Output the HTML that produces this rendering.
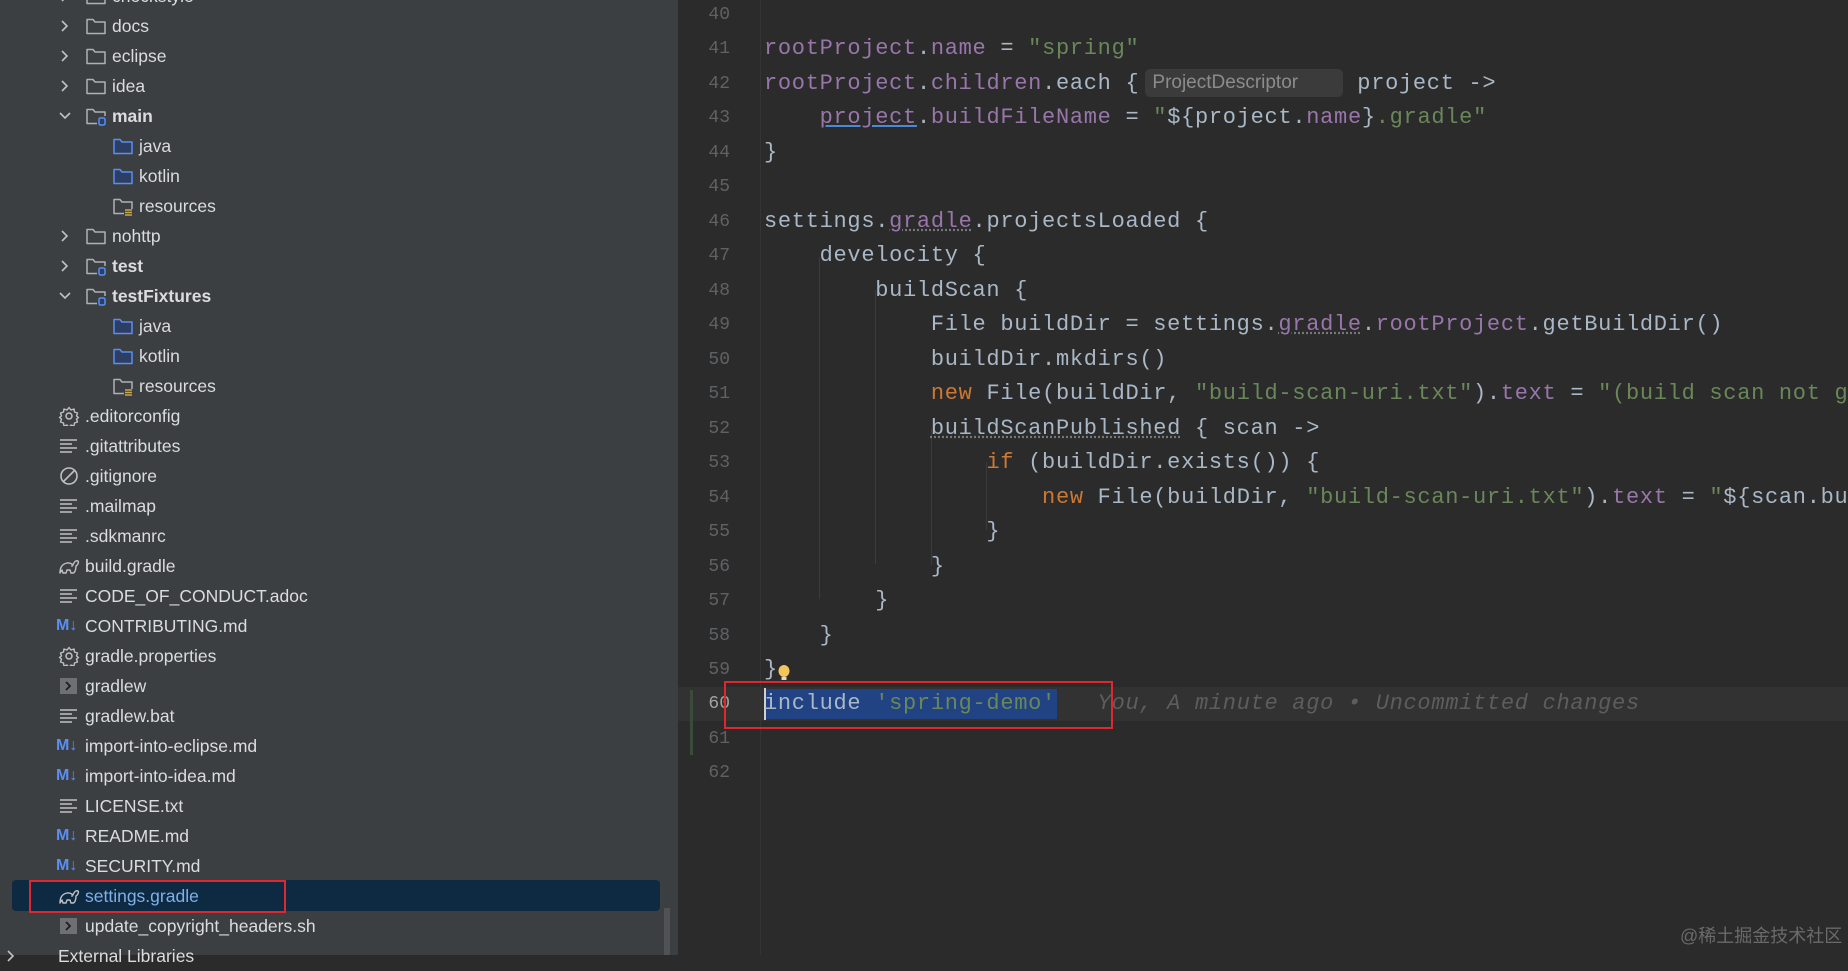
<!DOCTYPE html>
<html><head><meta charset="utf-8"><style>
*{margin:0;padding:0;box-sizing:border-box}
body{width:1848px;height:955px;overflow:hidden;background:#2b2b2b;position:relative;font-family:"Liberation Sans",sans-serif}
#side{position:absolute;left:0;top:0;width:678px;height:955px;background:#3c3f41}
.r{position:absolute;height:30px;line-height:30px;font-size:17.5px;color:#dadcdf;white-space:nowrap}
.r svg{position:absolute;top:5px}
.b{font-weight:bold}
.sel{position:absolute;left:12px;top:880px;width:648px;height:31px;background:#0d2a42;border-radius:4px}
.red{position:absolute;border:2px solid #e0262e}
#ed{position:absolute;left:678px;top:0;width:1170px;height:955px;background:#2b2b2b;overflow:hidden}
.ln{position:absolute;left:0;width:52px;text-align:right;font-family:"Liberation Mono",monospace;font-size:18px;color:#5f6265;height:34px;line-height:34px}
.c{position:absolute;left:86px;font-family:"Liberation Mono",monospace;font-size:22px;letter-spacing:0.7px;color:#a9b7c6;height:34px;line-height:34px;white-space:pre}
.p{color:#9876aa}.s{color:#6a8759}.k{color:#cc7832}
.g{position:absolute;width:1px;background:#3b3b3b}
.md{position:absolute;left:56px;top:0;font-weight:bold;color:#5a8ef2;font-size:16px}
</style></head><body>
<svg width="0" height="0" style="position:absolute">
<defs>
<symbol id="fo" viewBox="0 0 22 20"><path d="M2 3.5h6l2 2.5h10v11.5H2z" fill="none" stroke="#aeb1b4" stroke-width="1.5" stroke-linejoin="round"/></symbol>
<symbol id="fb" viewBox="0 0 22 20"><path d="M2 3.5h6l2 2.5h10v11.5H2z" fill="#2c3e63" stroke="#5a8ef2" stroke-width="1.5" stroke-linejoin="round"/></symbol>
<symbol id="fm" viewBox="0 0 22 20"><path d="M12 17.5H2V3.5h6l2 2.5h10v4" fill="none" stroke="#aeb1b4" stroke-width="1.5" stroke-linejoin="round"/><rect x="14" y="12" width="6" height="7" rx="1.5" fill="#2c3e63" stroke="#5a8ef2" stroke-width="1.5"/></symbol>
<symbol id="fr" viewBox="0 0 22 20"><path d="M12 17.5H2V3.5h6l2 2.5h10v7" fill="none" stroke="#aeb1b4" stroke-width="1.5" stroke-linejoin="round"/><path d="M13 14h7M13 16.5h7M13 19h7" stroke="#c9a74a" stroke-width="1.5"/></symbol>
<symbol id="ch" viewBox="0 0 14 20"><path d="M4 5l5 5-5 5" fill="none" stroke="#bfc1c4" stroke-width="1.6"/></symbol>
<symbol id="cd" viewBox="0 0 14 20"><path d="M2 7l5 5 5-5" fill="none" stroke="#bfc1c4" stroke-width="1.6"/></symbol>
<symbol id="tx" viewBox="0 0 22 20"><path d="M2 4h17M2 8h12M2 12h17M2 16h12" stroke="#bfc1c4" stroke-width="1.6"/></symbol>
<symbol id="gr" viewBox="0 0 22 20"><circle cx="11" cy="10" r="3" fill="none" stroke="#bfc1c4" stroke-width="1.5"/><path d="M11 1.5l2 2.5 3-1 .5 3 3 1-1 3 2 1.5-2 1.5 1 3-3 1-.5 3-3-1-2 2.5-2-2.5-3 1-.5-3-3-1 1-3-2-1.5 2-1.5-1-3 3-1 .5-3 3 1z" fill="none" stroke="#bfc1c4" stroke-width="1.4" stroke-linejoin="round"/></symbol>
<symbol id="no" viewBox="0 0 22 20"><circle cx="11" cy="10" r="8" fill="none" stroke="#bfc1c4" stroke-width="1.6"/><path d="M5.5 15.5l11-11" stroke="#bfc1c4" stroke-width="1.6"/></symbol>
<symbol id="el" viewBox="0 0 22 20"><path d="M2 17c0-5 2-9 7-10 3-.5 5 1 6 2 1-3 3-5 5-4 1 1 0 4-2 5 0 3-1 7-3 7h-2l-1-3h-3l-1 3H5l-1-3-2 3z" fill="none" stroke="#bfc1c4" stroke-width="1.4" stroke-linejoin="round"/><circle cx="14" cy="10" r=".9" fill="#bfc1c4"/></symbol>
<symbol id="sh" viewBox="0 0 22 20"><rect x="2" y="2" width="17" height="16" fill="#6e7073"/><path d="M8 6l4 4-4 4" fill="none" stroke="#1e1f22" stroke-width="1.8"/></symbol>
</defs></svg>
<div id="side">
<div class="r" style="top:-19px;left:0"><svg style="left:58px" width="14" height="20"><use href="#ch"/></svg><svg style="left:85px" width="22" height="20"><use href="#fo"/></svg><span style="position:absolute;left:112px">checkstyle</span></div>
<div class="r" style="top:11px;left:0"><svg style="left:58px" width="14" height="20"><use href="#ch"/></svg><svg style="left:85px" width="22" height="20"><use href="#fo"/></svg><span style="position:absolute;left:112px">docs</span></div>
<div class="r" style="top:41px;left:0"><svg style="left:58px" width="14" height="20"><use href="#ch"/></svg><svg style="left:85px" width="22" height="20"><use href="#fo"/></svg><span style="position:absolute;left:112px">eclipse</span></div>
<div class="r" style="top:71px;left:0"><svg style="left:58px" width="14" height="20"><use href="#ch"/></svg><svg style="left:85px" width="22" height="20"><use href="#fo"/></svg><span style="position:absolute;left:112px">idea</span></div>
<div class="r" style="top:101px;left:0"><svg style="left:58px" width="14" height="20"><use href="#cd"/></svg><svg style="left:85px" width="22" height="20"><use href="#fm"/></svg><span class="b" style="position:absolute;left:112px">main</span></div>
<div class="r" style="top:131px;left:0"><svg style="left:112px" width="22" height="20"><use href="#fb"/></svg><span style="position:absolute;left:139px">java</span></div>
<div class="r" style="top:161px;left:0"><svg style="left:112px" width="22" height="20"><use href="#fb"/></svg><span style="position:absolute;left:139px">kotlin</span></div>
<div class="r" style="top:191px;left:0"><svg style="left:112px" width="22" height="20"><use href="#fr"/></svg><span style="position:absolute;left:139px">resources</span></div>
<div class="r" style="top:221px;left:0"><svg style="left:58px" width="14" height="20"><use href="#ch"/></svg><svg style="left:85px" width="22" height="20"><use href="#fo"/></svg><span style="position:absolute;left:112px">nohttp</span></div>
<div class="r" style="top:251px;left:0"><svg style="left:58px" width="14" height="20"><use href="#ch"/></svg><svg style="left:85px" width="22" height="20"><use href="#fm"/></svg><span class="b" style="position:absolute;left:112px">test</span></div>
<div class="r" style="top:281px;left:0"><svg style="left:58px" width="14" height="20"><use href="#cd"/></svg><svg style="left:85px" width="22" height="20"><use href="#fm"/></svg><span class="b" style="position:absolute;left:112px">testFixtures</span></div>
<div class="r" style="top:311px;left:0"><svg style="left:112px" width="22" height="20"><use href="#fb"/></svg><span style="position:absolute;left:139px">java</span></div>
<div class="r" style="top:341px;left:0"><svg style="left:112px" width="22" height="20"><use href="#fb"/></svg><span style="position:absolute;left:139px">kotlin</span></div>
<div class="r" style="top:371px;left:0"><svg style="left:112px" width="22" height="20"><use href="#fr"/></svg><span style="position:absolute;left:139px">resources</span></div>
<div class="r" style="top:401px;left:0"><svg style="left:58px" width="22" height="20"><use href="#gr"/></svg><span style="position:absolute;left:85px">.editorconfig</span></div>
<div class="r" style="top:431px;left:0"><svg style="left:58px" width="22" height="20"><use href="#tx"/></svg><span style="position:absolute;left:85px">.gitattributes</span></div>
<div class="r" style="top:461px;left:0"><svg style="left:58px" width="22" height="20"><use href="#no"/></svg><span style="position:absolute;left:85px">.gitignore</span></div>
<div class="r" style="top:491px;left:0"><svg style="left:58px" width="22" height="20"><use href="#tx"/></svg><span style="position:absolute;left:85px">.mailmap</span></div>
<div class="r" style="top:521px;left:0"><svg style="left:58px" width="22" height="20"><use href="#tx"/></svg><span style="position:absolute;left:85px">.sdkmanrc</span></div>
<div class="r" style="top:551px;left:0"><svg style="left:58px" width="22" height="20"><use href="#el"/></svg><span style="position:absolute;left:85px">build.gradle</span></div>
<div class="r" style="top:581px;left:0"><svg style="left:58px" width="22" height="20"><use href="#tx"/></svg><span style="position:absolute;left:85px">CODE_OF_CONDUCT.adoc</span></div>
<div class="r" style="top:611px;left:0"><span class="md">M↓</span><span style="position:absolute;left:85px">CONTRIBUTING.md</span></div>
<div class="r" style="top:641px;left:0"><svg style="left:58px" width="22" height="20"><use href="#gr"/></svg><span style="position:absolute;left:85px">gradle.properties</span></div>
<div class="r" style="top:671px;left:0"><svg style="left:58px" width="22" height="20"><use href="#sh"/></svg><span style="position:absolute;left:85px">gradlew</span></div>
<div class="r" style="top:701px;left:0"><svg style="left:58px" width="22" height="20"><use href="#tx"/></svg><span style="position:absolute;left:85px">gradlew.bat</span></div>
<div class="r" style="top:731px;left:0"><span class="md">M↓</span><span style="position:absolute;left:85px">import-into-eclipse.md</span></div>
<div class="r" style="top:761px;left:0"><span class="md">M↓</span><span style="position:absolute;left:85px">import-into-idea.md</span></div>
<div class="r" style="top:791px;left:0"><svg style="left:58px" width="22" height="20"><use href="#tx"/></svg><span style="position:absolute;left:85px">LICENSE.txt</span></div>
<div class="r" style="top:821px;left:0"><span class="md">M↓</span><span style="position:absolute;left:85px">README.md</span></div>
<div class="r" style="top:851px;left:0"><span class="md">M↓</span><span style="position:absolute;left:85px">SECURITY.md</span></div>
<div class="sel"></div>
<div class="r" style="top:881px;left:0"><svg style="left:58px" width="22" height="20"><use href="#el"/></svg><span style="position:absolute;left:85px;color:#7fb0e8">settings.gradle</span></div>
<div class="red" style="left:29px;top:880px;width:257px;height:33px"></div>
<div class="r" style="top:911px;left:0"><svg style="left:58px" width="22" height="20"><use href="#sh"/></svg><span style="position:absolute;left:85px">update_copyright_headers.sh</span></div>
<div class="r" style="top:941px;left:0"><svg style="left:4px" width="14" height="20"><use href="#ch"/></svg><span style="position:absolute;left:58px">External Libraries</span></div>
<div style="position:absolute;left:664px;top:908px;width:6px;height:47px;background:#505254"></div>
</div>
<div id="ed">
<div style="position:absolute;left:0;top:687px;width:1170px;height:34px;background:#323232"></div>
<div style="position:absolute;left:82px;top:0;width:1px;height:955px;background:#353535"></div>
<div style="position:absolute;left:12px;top:690px;width:3px;height:65px;background:#384c38"></div>
<div class="g" style="left:141px;top:257px;height:342px"></div>
<div class="g" style="left:197px;top:290px;height:274px"></div>
<div class="g" style="left:253px;top:428px;height:137px"></div>
<div class="g" style="left:308px;top:462px;height:68px"></div>

<div class="ln" style="top:-2px">40</div>
<div class="ln" style="top:32px">41</div><div class="c" style="top:32px"><span class="p">rootProject</span>.<span class="p">name</span> = <span class="s">"spring"</span></div>
<div class="ln" style="top:67px">42</div><div class="c" style="top:67px"><span class="p">rootProject</span>.<span class="p">children</span>.each {<span style="display:inline-block;margin-left:6px;width:198px;height:28px;line-height:28px;vertical-align:middle;font-family:'Liberation Sans',sans-serif;font-size:19px;letter-spacing:0;color:#8c8c8c;background:#3b3b3b;border-radius:5px;padding:0 7px">ProjectDescriptor</span> project -&gt;</div>
<div class="ln" style="top:101px">43</div><div class="c" style="top:101px">    <span class="p" style="text-decoration:underline;text-decoration-color:#4a88d8">project</span>.<span class="p">buildFileName</span> = <span class="s">"</span>${project.<span class="p">name</span>}<span class="s">.gradle"</span></div>
<div class="ln" style="top:136px">44</div><div class="c" style="top:136px">}</div>
<div class="ln" style="top:170px">45</div>
<div class="ln" style="top:205px">46</div><div class="c" style="top:205px">settings.<span class="p" style="text-decoration:underline dotted #777">gradle</span>.projectsLoaded {</div>
<div class="ln" style="top:239px">47</div><div class="c" style="top:239px">    develocity {</div>
<div class="ln" style="top:274px">48</div><div class="c" style="top:274px">        buildScan {</div>
<div class="ln" style="top:308px">49</div><div class="c" style="top:308px">            File buildDir = settings.<span class="p" style="text-decoration:underline dotted #777">gradle</span>.<span class="p">rootProject</span>.getBuildDir()</div>
<div class="ln" style="top:343px">50</div><div class="c" style="top:343px">            buildDir.mkdirs()</div>
<div class="ln" style="top:377px">51</div><div class="c" style="top:377px">            <span class="k">new</span> File(buildDir, <span class="s">"build-scan-uri.txt"</span>).<span class="p">text</span> = <span class="s">"(build scan not generated)"</span></div>
<div class="ln" style="top:412px">52</div><div class="c" style="top:412px">            <span style="text-decoration:underline dotted #777">buildScanPublished</span> { scan -&gt;</div>
<div class="ln" style="top:446px">53</div><div class="c" style="top:446px">                <span class="k">if</span> (buildDir.exists()) {</div>
<div class="ln" style="top:481px">54</div><div class="c" style="top:481px">                    <span class="k">new</span> File(buildDir, <span class="s">"build-scan-uri.txt"</span>).<span class="p">text</span> = <span class="s">"</span>${scan.buildScanUri}</div>
<div class="ln" style="top:515px">55</div><div class="c" style="top:515px">                }</div>
<div class="ln" style="top:550px">56</div><div class="c" style="top:550px">            }</div>
<div class="ln" style="top:584px">57</div><div class="c" style="top:584px">        }</div>
<div class="ln" style="top:619px">58</div><div class="c" style="top:619px">    }</div>
<div class="ln" style="top:653px">59</div><div class="c" style="top:653px">}</div>
<svg style="position:absolute;left:99px;top:664px" width="14" height="20"><ellipse cx="7" cy="7" rx="5.5" ry="6" fill="#f2c55c"/><rect x="4.5" y="13" width="5" height="3" fill="#d8d8d8"/></svg>
<div style="position:absolute;left:86px;top:689px;width:293px;height:30px;background:#214283"></div>
<div style="position:absolute;left:86px;top:688px;width:2px;height:32px;background:#d0d0d0"></div>
<div class="ln" style="top:687px;color:#a4a3a3">60</div><div class="c" style="top:687px">include <span class="s">'spring-demo'</span>   <span style="color:#5d5d5d;font-style:italic">You, A minute ago • Uncommitted changes</span></div>
<div class="red" style="left:46px;top:681px;width:389px;height:48px"></div>
<div class="ln" style="top:722px">61</div>
<div class="ln" style="top:756px">62</div>
<div style="position:absolute;left:1002px;top:922px;font-family:'Liberation Sans','Noto Sans CJK SC',sans-serif;font-size:18px;color:#6a6a6a">@稀土掘金技术社区</div>
</div>
</body></html>
